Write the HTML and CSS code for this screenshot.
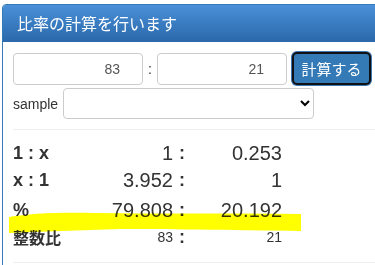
FILE: index.html
```html
<!DOCTYPE html>
<html lang="ja">
<head>
    <meta charset="UTF-8">
    <meta name="viewport" content="width=device-width, initial-scale=1.0">
    <title>比率の計算</title>
    <link rel="stylesheet" href="styles.css">
</head>
<body>
    <div class="page">
        <div class="panel">
            <div class="panel-heading">
                <h3>比率の計算を行います</h3>
            </div>
            <div class="panel-body">
                <div class="calc-row">
                    <input class="num" type="text" value="83">
                    <span class="sep">:</span>
                    <input class="num" type="text" value="21">
                    <button class="btn-calc">計算する</button>
                </div>
                <div class="sample-row">
                    <label class="sample-label">sample</label>
                    <select class="sample-select">
                        <option></option>
                    </select>
                </div>
                <hr>
                <div class="results">
                    <div class="label">1 : x</div>
                    <div class="val">1</div>
                    <div class="colon">:</div>
                    <div class="val">0.253</div>

                    <div class="label">x : 1</div>
                    <div class="val">3.952</div>
                    <div class="colon">:</div>
                    <div class="val">1</div>

                    <div class="label">%</div>
                    <div class="val">79.808</div>
                    <div class="colon">:</div>
                    <div class="val">20.192</div>

                    <div class="label label-jp">整数比</div>
                    <div class="val small">83</div>
                    <div class="colon">:</div>
                    <div class="val small">21</div>
                </div>
                <hr>
            </div>
        </div>
    </div>

    <!-- 手書きの蛍光ペン -->
    <svg class="marker" width="375" height="265" viewBox="0 0 375 265">
        <path d="M9,217 C30,213 60,212 100,213 C160,214 230,213 301,214 L301,231 C230,230 160,229 120,229 C80,230 40,232 9,233 Z" fill="#ffff00"/>
    </svg>
</body>
</html>
```

FILE: styles.css
```css
body {
    margin: 0;
    overflow: hidden;
    font-family: "Liberation Sans", "Noto Sans CJK JP", sans-serif;
    font-size: 14px;
    color: #333;
    background: #fff;
}
.page {
    padding: 4px 0 0 2px;
}
.panel {
    width: 420px;
    min-height: 300px;
    border: 1px solid #337ab7;
    border-radius: 4px;
}
.panel-heading {
    padding: 10px 14px;
    color: #fff;
    background: linear-gradient(#4a90d8, #2a68aa);
    border-top-left-radius: 3px;
}
.panel-heading h3 {
    margin: 0;
    font-size: 16px;
    font-weight: normal;
    line-height: 17px;
    font-family: "Noto Sans CJK JP", sans-serif;
}
.panel-body {
    padding: 10px 10px;
}
.calc-row {
    display: flex;
    align-items: center;
}
.num {
    box-sizing: border-box;
    width: 130px;
    height: 32px;
    padding: 0 22px 0 8px;
    border: 1px solid #ccc;
    border-radius: 4px;
    text-align: right;
    font-family: "Liberation Sans", sans-serif;
    font-size: 14px;
    color: #555;
}
.sep {
    width: 14px;
    text-align: center;
    color: #333;
}
.btn-calc {
    box-sizing: border-box;
    width: 79px;
    height: 33px;
    margin-left: 5px;
    padding: 0;
    border: 2px solid #111;
    border-radius: 5px;
    box-shadow: 0 0 0 1px #3b78b5;
    background: #337ab7;
    color: #fff;
    font-family: "Noto Sans CJK JP", sans-serif;
    font-size: 15px;
}
.sample-row {
    display: flex;
    align-items: center;
    margin-top: 3px;
}
.sample-label {
    margin-right: 5px;
}
.sample-select {
    box-sizing: border-box;
    width: 251px;
    height: 31px;
    border: 1px solid #ccc;
    border-radius: 4px;
    background: #fff;
}
hr {
    margin: 10px 0 0 0;
    border: 0;
    border-top: 1px solid #eee;
}
.results {
    display: grid;
    grid-template-columns: 90px 70px 18px 91px;
    grid-template-rows: 28px 26px 34px 20px;
    align-items: center;
    margin: 9px 0 15px 0;
}
.label {
    font-size: 18px;
    font-weight: bold;
}
.label-jp {
    font-family: "Noto Sans CJK JP", sans-serif;
    font-size: 16px;
}
.val {
    text-align: right;
    font-size: 20px;
}
.val.small {
    font-size: 14px;
}
.colon {
    text-align: center;
    font-size: 18px;
    font-weight: bold;
}
.marker {
    position: absolute;
    top: 0;
    left: 0;
    pointer-events: none;
    mix-blend-mode: multiply;
}
```
